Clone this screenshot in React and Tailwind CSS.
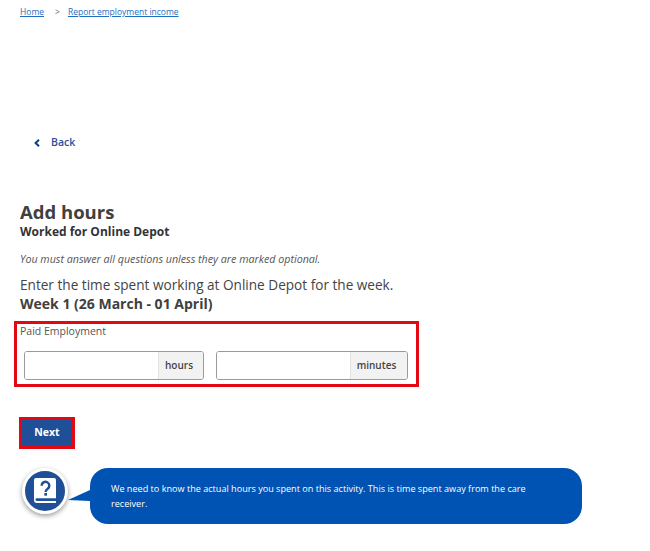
import React from 'react';

const Unit = ({ label, width, unitWidth, pad }) => (
  <div className={`flex h-[29px] rounded-[3px] border-[1.5px] border-[#9a9a9a] overflow-hidden ${width}`}>
    <div className="flex-1 bg-white"></div>
    <div className={`flex items-center justify-center bg-[#f2f2f2] border-l border-[#e2e2e2] text-[10px] font-semibold text-[#444] ${unitWidth} ${pad}`}>
      {label}
    </div>
  </div>
);

const App = () => {
  return (
    <div className="w-[650px] h-[551px] bg-white overflow-hidden text-[#444] font-['Open_Sans',sans-serif]">
      {/* Breadcrumb */}
      <div className="flex items-center pl-[20px] pt-[6px] h-[18px] text-[8.5px] leading-[12px]">
        <a href="#" className="text-[#1d6fc0] underline">Home</a>
        <span className="ml-[11px] mr-[8px] text-[#666]">&gt;</span>
        <a href="#" className="text-[#1d6fc0] underline">Report employment income</a>
      </div>

      {/* Back */}
      <div className="flex items-center pl-[34px] mt-[116px] h-[18px] text-[10.5px] font-semibold text-[#1f4f96]">
        <svg width="6" height="8" viewBox="0 0 6 8" className="mr-[11px]">
          <path d="M5 0.8 L1.6 4 L5 7.2" fill="none" stroke="#0b3f8a" strokeWidth="2" />
        </svg>
        <a href="#">Back</a>
      </div>

      {/* Heading */}
      <div className="pl-[20px] mt-[48px]">
        <h1 className="text-[18.5px] leading-[24px] font-bold text-[#404040]">Add hours</h1>
        <p className="text-[12px] leading-[15px] font-bold text-[#333]">Worked for Online Depot</p>
        <p className="mt-[13px] text-[10.7px] leading-[14px] italic text-[#555]">You must answer all questions unless they are marked optional.</p>
        <p className="mt-[10px] text-[13.6px] leading-[18px] text-[#444]">Enter the time spent working at Online Depot for the week.</p>
        <p className="text-[14px] leading-[19px] font-bold text-[#404040]">Week 1 (26 March - 01 April)</p>
      </div>

      {/* Inputs */}
      <div className="ml-[14px] mt-[8px] w-[405px] h-[66px] border-[3px] border-[#e30613] pl-[7px] pr-[7px]">
        <p className="-ml-[4px] text-[10.5px] leading-[15px] text-[#555]">Paid Employment</p>
        <div className="flex gap-[12px] mt-[12px]">
          <Unit label="hours" width="w-[180px]" unitWidth="w-[45px]" pad="pr-[4px]" />
          <Unit label="minutes" width="w-[192px]" unitWidth="w-[57px]" pad="pr-[5px]" />
        </div>
      </div>

      {/* Next */}
      <div className="ml-[19px] mt-[30px] w-[56px] h-[32px] border-[3px] border-[#e30613] bg-[#1f4f96] flex items-center justify-center text-[10.5px] font-bold text-white">
        Next
      </div>

      {/* Help */}
      <div className="flex items-start ml-[22px] mt-[19px]">
        <div className="w-[46px] h-[46px] shrink-0 rounded-full bg-[#1f4f96] border-[3px] border-white shadow-[0_2px_5px_rgba(0,0,0,0.4)] flex items-center justify-center">
          <svg width="22" height="26" viewBox="0 0 23 27">
            <path d="M2 0 H21 a2 2 0 0 1 2 2 V21 H3 a1.5 1.5 0 0 0 0 3 H23 v2 H3 a3 3 0 0 1 -3 -3 V2 a2 2 0 0 1 2 -2 Z" fill="#fff" />
            <path d="M8 8 a4 4 0 1 1 6.3 3.2 c-1.4 1 -2.1 1.6 -2.1 3.3" fill="none" stroke="#1f4f96" strokeWidth="2.6" />
            <rect x="10.8" y="15.6" width="2.8" height="2.8" fill="#1f4f96" />
          </svg>
        </div>
        <svg width="22" height="20" viewBox="0 0 22 20" className="shrink-0 mt-[18px]">
          <path d="M22 4 L0 14 L22 15 Z" fill="#0053b3" />
        </svg>
        <div className="w-[492px] h-[56px] rounded-[18px] bg-[#0053b3] pl-[21px] pr-[40px] flex items-center text-[9.1px] leading-[15px] text-white">
          We need to know the actual hours you spent on this activity. This is time spent away from the care receiver.
        </div>
      </div>
    </div>
  );
};

export default App;
